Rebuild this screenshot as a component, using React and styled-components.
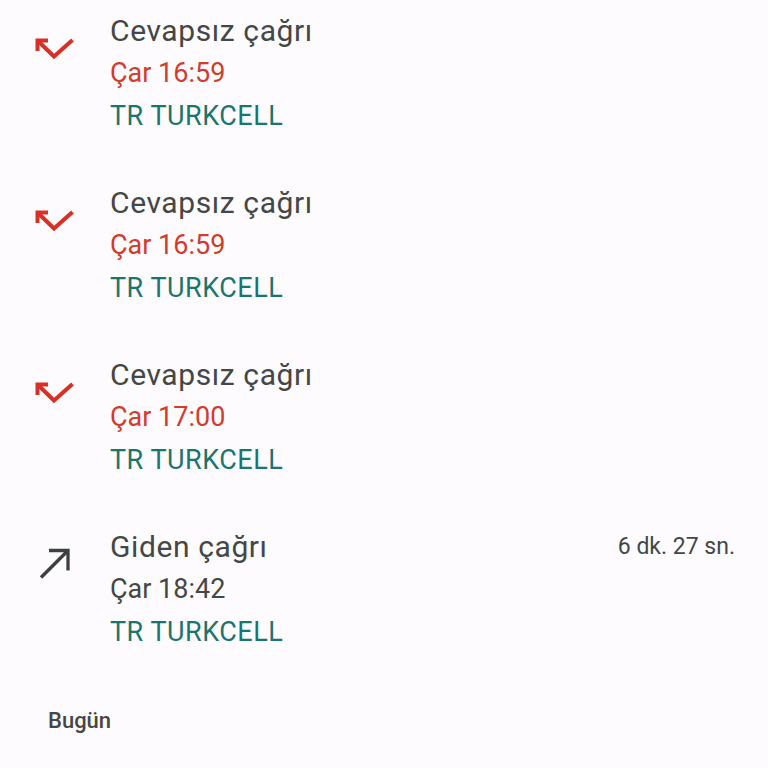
import React from "react";
import styled, { createGlobalStyle } from "styled-components";

const calls = [
  { type: "missed", title: "Cevapsız çağrı", time: "Çar 16:59", carrier: "TR TURKCELL" },
  { type: "missed", title: "Cevapsız çağrı", time: "Çar 16:59", carrier: "TR TURKCELL" },
  { type: "missed", title: "Cevapsız çağrı", time: "Çar 17:00", carrier: "TR TURKCELL" },
  { type: "outgoing", title: "Giden çağrı", time: "Çar 18:42", carrier: "TR TURKCELL", duration: "6 dk. 27 sn." },
];

const GlobalStyle = createGlobalStyle`
  html, body {
    margin: 0;
    background: #fdfbfe;
  }
  body {
    font-family: Roboto, "Noto Sans", sans-serif;
    -webkit-font-smoothing: antialiased;
  }
`;

const MissedIcon = () => (
  <svg width="44" height="44" viewBox="0 0 44 44" fill="none">
    <g stroke="#d93025" strokeWidth="4" strokeLinecap="butt" strokeLinejoin="miter">
      <polyline points="15,11.5 4.5,11.5 4.5,22" />
      <polyline points="4.5,11.5 21,27.5 39.5,11" />
    </g>
  </svg>
);

const OutgoingIcon = () => (
  <svg width="44" height="44" viewBox="0 0 44 44" fill="none">
    <g stroke="#3c4043" strokeWidth="3.3" strokeLinecap="butt" strokeLinejoin="miter">
      <polyline points="16,5.5 35,5.5 35,25.5" />
      <line x1="35" y1="5.5" x2="8" y2="32.5" />
    </g>
  </svg>
);

const CallLog = () => (
  <Page>
    <GlobalStyle />
    <List>
      {calls.map((c, i) => (
        <Row key={i}>
          <IconCell>{c.type === "missed" ? <MissedIcon /> : <OutgoingIcon />}</IconCell>
          <Details>
            <Title>{c.title}</Title>
            <Time missed={c.type === "missed"}>{c.time}</Time>
            <Carrier>{c.carrier}</Carrier>
          </Details>
          <Duration>{c.duration}</Duration>
        </Row>
      ))}
    </List>
    <SectionHeader>Bugün</SectionHeader>
  </Page>
);

const Page = styled.div`
  width: 768px;
  height: 768px;
  overflow: hidden;
  background: #fdfbfe;
`;

const List = styled.div`
  display: flex;
  flex-direction: column;
  gap: 43px;
  padding-top: 8.5px;
`;

const Row = styled.div`
  display: grid;
  grid-template-columns: 110px 1fr auto;
  padding-right: 33px;
`;

const IconCell = styled.div`
  padding-left: 33px;
  padding-top: 20px;
  svg {
    display: block;
  }
`;

const Details = styled.div`
  display: flex;
  flex-direction: column;
`;

const Line = styled.div`
  height: 43px;
  line-height: 43px;
  font-size: 27px;
  white-space: nowrap;
`;

const Title = styled(Line)`
  font-size: 30px;
  letter-spacing: 0.6px;
  color: #444746;
`;

const Time = styled(Line)`
  color: ${(p) => (p.missed ? "#d33b2c" : "#444746")};
`;

const Carrier = styled(Line)`
  letter-spacing: 0.5px;
  color: #1a766c;
`;

const Duration = styled.div`
  height: 43px;
  line-height: 43px;
  font-size: 23px;
  color: #444746;
`;

const SectionHeader = styled.div`
  padding: 45px 0 0 48px;
  font-size: 22px;
  font-weight: 500;
  line-height: 43px;
  color: #444746;
`;

export default CallLog;
